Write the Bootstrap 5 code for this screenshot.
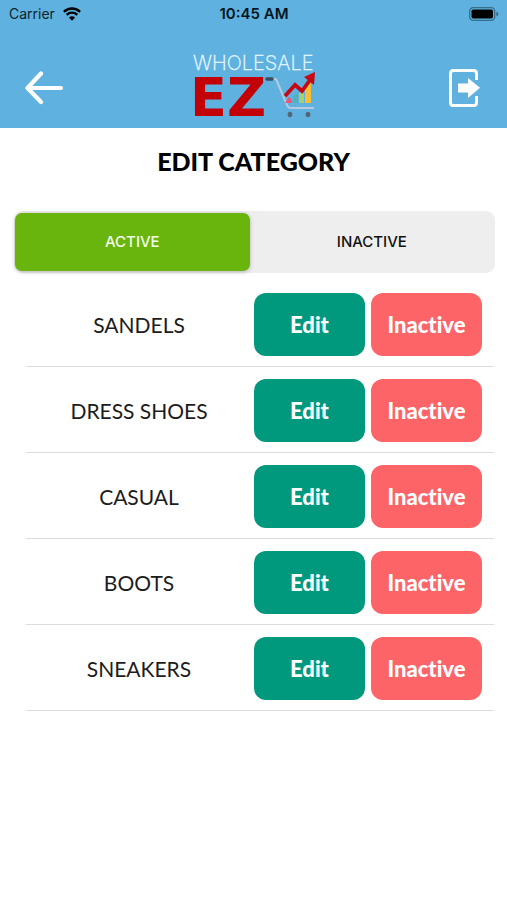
<!DOCTYPE html>
<html lang="en">
<head>
<meta charset="utf-8">
<meta name="viewport" content="width=device-width, initial-scale=1">
<title>Edit Category</title>
<link href="https://cdn.jsdelivr.net/npm/bootstrap@5.3.0/dist/css/bootstrap.min.css" rel="stylesheet">
<style>
  body { font-family: Lato, "Liberation Sans", sans-serif; color: #000; background: #fff; }
  .app-header { background: #5fb2df; }
  .status-bar { height: 28px; padding: 0 8px 0 9px; font: 14px/28px Inter, sans-serif; color: #10222c; }
  .status-side { flex: 1 1 0; }
  .status-time { font-size: 15px; font-weight: 600; color: #06151d; }
  .top-bar { padding: 20px 24px 0; }
  .icon-button { background: none; border: 0; padding: 0; line-height: 0; }
  .page-title { font-size: 25px; line-height: 32px; font-weight: 900; margin: 17px 0 34px; }
  .segments { margin: 0 12px 8px 14px; padding: 2px 1px; height: 62px; background: #eee; border-radius: 9px; }
  .segment { flex: 1 1 0; border: 0; border-radius: 7px; background: transparent; color: #111; font: 500 15px/20px Inter, sans-serif; }
  .segment.is-active { flex: 0 0 49%; background: #69b40d; color: #f4ffe8; box-shadow: 0 1px 4px rgba(0, 0, 0, .25); }
  .category-list { margin: 0 13px 0 26px; }
  .category-row { padding: 12px 12px 10px 4px; border-bottom: 1px solid #dcdcdc; gap: 6px; }
  .category-name { font-size: 21px; line-height: 28px; color: #1c1c1c; }
  .action { width: 111px; height: 63px; border: 0; border-radius: 12px; color: #fff; font-size: 22px; line-height: 28px; font-weight: 900; font-variant-ligatures: none; }
  .action-edit { background: #00997e; }
  .action-inactive { background: #fc6467; }
</style>
<script src="https://cdn.jsdelivr.net/npm/bootstrap@5.3.0/dist/js/bootstrap.bundle.min.js"></script>
</head>
<body>
<header class="app-header">
  <div class="status-bar d-flex align-items-center">
    <div class="status-side d-flex align-items-center gap-2">
      <span>Carrier</span>
      <svg width="18" height="14" viewBox="0 0 18 14" fill="none" stroke="#000" aria-hidden="true">
        <path d="M.9 4.8a11.5 11.5 0 0 1 16.2 0M3.7 7.8a7.6 7.6 0 0 1 10.6 0" stroke-width="2.4"/>
        <path d="M9 13.8 5.9 10.6a4.4 4.4 0 0 1 6.2 0z" fill="#000" stroke="none"/>
      </svg>
    </div>
    <span class="status-time">10:45 AM</span>
    <div class="status-side d-flex justify-content-end">
      <svg width="30" height="14" viewBox="0 0 30 14" aria-hidden="true">
        <rect x=".7" y=".7" width="25" height="12.6" rx="3.6" fill="none" stroke="#366e8c" stroke-width="1.3"/>
        <rect x="2.5" y="2.5" width="21.5" height="9" rx="1.8" fill="#000"/>
        <path d="M27.3 4.5q2.2 1 2.2 2.5t-2.2 2.5z" fill="#366e8c"/>
      </svg>
    </div>
  </div>
  <nav class="top-bar d-flex align-items-center justify-content-between" aria-label="Main">
    <button type="button" class="icon-button" aria-label="Back">
      <svg width="40" height="34" viewBox="0 0 40 34" fill="none" stroke="#fff" stroke-width="4.2" stroke-linecap="round" stroke-linejoin="round">
        <path d="M37 17H3.500M17 2.500 3.500 17 17 31"/>
      </svg>
    </button>
    <svg width="136" height="80" viewBox="-4 -2 136 80" overflow="visible" role="img" aria-label="Wholesale EZ">
      <text x="1" y="20" font-family="Inter, sans-serif" font-size="20" font-weight="200" fill="#e9f8ff" stroke="#e9f8ff" stroke-width=".3">WHOLESALE</text>
      <text x="-2" y="66" font-family="DejaVu Sans, sans-serif" font-size="54" font-weight="700" fill="#c40007">EZ</text>
      <path d="M78 29h6l11 26q1 3 4 3h23" fill="none" stroke="#b5c9df" stroke-width="2" stroke-linejoin="round"/>
      <path d="M75 29h5" stroke="#35505f" stroke-width="3.500" stroke-linecap="round"/>
      <path d="m93 53 4-6 3 3v3z" fill="#ef5675"/>
      <path d="M101 46l5-3v10h-5z" fill="#4fb3bd"/>
      <path d="M107 43h5v10h-5z" fill="#a4cf72"/>
      <path d="M113 38l6-6v21h-6z" fill="#f6bd35"/>
      <path d="M93 46 103 35l7 6 8-11" fill="none" stroke="#c70812" stroke-width="3.800"/>
      <path d="m112 27 11-5-1 13z" fill="#c70812"/>
      <ellipse cx="98" cy="64.500" rx="2.300" ry="2.800" fill="#546574"/>
      <ellipse cx="116" cy="64.500" rx="2.300" ry="2.800" fill="#546574"/>
    </svg>
    <button type="button" class="icon-button" aria-label="Log out">
      <svg width="36" height="40" viewBox="0 0 36 40">
        <path d="M29.500 12V5.500Q29.500 2.500 26.500 2.500H6.500Q3.500 2.500 3.500 5.500v29q0 3 3 3h20q3 0 3-3V28" fill="none" stroke="#fff" stroke-width="3"/>
        <path d="M11 15.500h10V10l12 9.800L21 30v-5.500H11z" fill="#fff"/>
      </svg>
    </button>
  </nav>
</header>
<main>
  <h1 class="page-title text-center">EDIT CATEGORY</h1>
  <div class="segments d-flex" role="group" aria-label="Category status">
    <button type="button" class="segment is-active" aria-pressed="true">ACTIVE</button>
    <button type="button" class="segment" aria-pressed="false">INACTIVE</button>
  </div>
  <ul class="category-list list-unstyled">
    <li class="category-row d-flex align-items-center"><span class="category-name flex-fill text-center">SANDELS</span><button type="button" class="action action-edit">Edit</button><button type="button" class="action action-inactive">Inactive</button></li>
    <li class="category-row d-flex align-items-center"><span class="category-name flex-fill text-center">DRESS SHOES</span><button type="button" class="action action-edit">Edit</button><button type="button" class="action action-inactive">Inactive</button></li>
    <li class="category-row d-flex align-items-center"><span class="category-name flex-fill text-center">CASUAL</span><button type="button" class="action action-edit">Edit</button><button type="button" class="action action-inactive">Inactive</button></li>
    <li class="category-row d-flex align-items-center"><span class="category-name flex-fill text-center">BOOTS</span><button type="button" class="action action-edit">Edit</button><button type="button" class="action action-inactive">Inactive</button></li>
    <li class="category-row d-flex align-items-center"><span class="category-name flex-fill text-center">SNEAKERS</span><button type="button" class="action action-edit">Edit</button><button type="button" class="action action-inactive">Inactive</button></li>
  </ul>
</main>
</body>
</html>
